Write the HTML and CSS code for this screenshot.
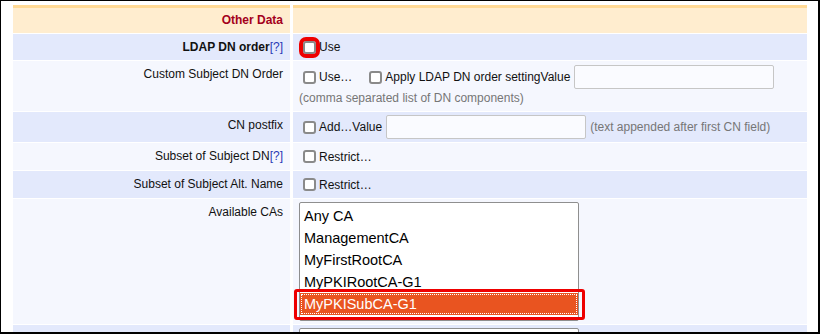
FILE: index.html
```html
<!DOCTYPE html>
<html lang="en">
<head>
  <meta charset="UTF-8">
  <meta name="viewport" content="width=device-width, initial-scale=1.0">
  <title>End Entity Profile - Other Data</title>
  <link rel="stylesheet" href="styles.css">
</head>
<body>
  <div class="frame">
    <table class="profile-table">
      <tr class="section">
        <td class="label">Other Data</td>
        <td class="field"></td>
      </tr>
      <tr class="alt">
        <td class="label"><b>LDAP DN order</b><a href="#" class="help">[?]</a></td>
        <td class="field">
          <div class="line">
            <label class="check-group"><input type="checkbox" class="flagged">Use</label>
          </div>
        </td>
      </tr>
      <tr class="plain">
        <td class="label">Custom Subject DN Order</td>
        <td class="field">
          <div class="line tall">
            <label class="check-group"><input type="checkbox">Use…</label>
            <label class="check-group"><input type="checkbox">Apply LDAP DN order setting</label>
            <span>Value</span>
            <input type="text" class="text-input">
          </div>
          <div class="hint">(comma separated list of DN components)</div>
        </td>
      </tr>
      <tr class="alt">
        <td class="label">CN postfix</td>
        <td class="field tight">
          <div class="line tall">
            <label class="check-group"><input type="checkbox">Add…</label>
            <span>Value</span>
            <input type="text" class="text-input">
            <span class="hint">(text appended after first CN field)</span>
          </div>
        </td>
      </tr>
      <tr class="plain">
        <td class="label">Subset of Subject DN<a href="#" class="help">[?]</a></td>
        <td class="field">
          <div class="line roomy">
            <label class="check-group"><input type="checkbox">Restrict…</label>
          </div>
        </td>
      </tr>
      <tr class="alt">
        <td class="label">Subset of Subject Alt. Name</td>
        <td class="field">
          <div class="line roomy">
            <label class="check-group"><input type="checkbox">Restrict…</label>
          </div>
        </td>
      </tr>
      <tr class="plain">
        <td class="label">Available CAs</td>
        <td class="field tight">
          <div class="ca-list" role="listbox">
            <div class="ca-item" role="option">Any CA</div>
            <div class="ca-item" role="option">ManagementCA</div>
            <div class="ca-item" role="option">MyFirstRootCA</div>
            <div class="ca-item" role="option">MyPKIRootCA-G1</div>
            <div class="ca-item selected" role="option" aria-selected="true">MyPKISubCA-G1<span class="annot"></span></div>
          </div>
        </td>
      </tr>
      <tr class="alt">
        <td class="label"></td>
        <td class="field tight">
          <div class="ca-select"></div>
        </td>
      </tr>
    </table>
  </div>
</body>
</html>
```

FILE: styles.css
```css
body {
  margin: 0;
  font-family: "Liberation Sans", Arial, sans-serif;
  font-size: 12px;
  color: #111;
  background: #fff;
}
.frame {
  width: 820px;
  height: 334px;
  box-sizing: border-box;
  border: solid #000;
  border-width: 1px 2px 2px 1px;
  overflow: hidden;
  background: #fff;
}
.profile-table {
  width: 800px;
  margin: 3px 0 0 9px;
  border-spacing: 3px 1px;
  table-layout: fixed;
}
.profile-table td {
  box-sizing: border-box;
  padding: 4px 6px;
  line-height: 18px;
  vertical-align: top;
}
.profile-table td.label {
  width: 277px;
  padding-right: 7px;
  text-align: right;
}
.profile-table td.tight {
  padding-top: 3px;
  padding-bottom: 3px;
}
.section td {
  background: #ffedcf;
  border-top: 3px solid #ffd995;
}
.profile-table .section td {
  padding-top: 3px;
  padding-bottom: 4px;
}
.section .label {
  font-weight: bold;
  color: #a3001c;
}
.alt td {
  background: #e3e9fc;
}
.plain td {
  background: #f5f7fe;
}
.help {
  color: #2a3ab5;
  text-decoration: none;
}
.line {
  display: flex;
  align-items: center;
  min-height: 18px;
}
.line.tall {
  height: 24px;
}
.line.roomy {
  min-height: 19px;
}
.check-group {
  display: flex;
  align-items: center;
}
.check-group + .check-group {
  margin-left: 13px;
}
.check-group input {
  appearance: none;
  -webkit-appearance: none;
  flex: none;
  width: 13px;
  height: 13px;
  margin: 0 3px 0 4px;
  box-sizing: border-box;
  border: 2px solid #8a8a8a;
  border-radius: 3px;
  background: #fff;
}
.check-group input.flagged {
  outline: 4px solid #ee0000;
  outline-offset: 0;
}
.text-input {
  width: 200px;
  height: 24px;
  box-sizing: border-box;
  margin: 0 0 0 4px;
  padding: 0 4px;
  border: 1px solid #c6c6c6;
  border-radius: 2px;
  background: #fafbff;
  font: inherit;
}
.hint {
  color: #767676;
}
.line .hint {
  margin-left: 4px;
}
.ca-list {
  width: 280px;
  height: 119px;
  box-sizing: border-box;
  padding-top: 2px;
  border: 1px solid #8f8f8f;
  border-radius: 2px;
  background: #fff;
  font-size: 14.5px;
  color: #000;
}
.ca-item {
  height: 22px;
  line-height: 22px;
  padding-left: 4px;
  white-space: nowrap;
}
.ca-item.selected {
  position: relative;
  background: #e95420;
  color: #fff;
  outline: 1px dotted #fff;
  outline-offset: -2px;
}
.annot {
  position: absolute;
  top: -4px;
  bottom: -5px;
  left: -6px;
  right: -7px;
  border: 3px solid #ee0000;
  border-radius: 3px;
  pointer-events: none;
}
.ca-select {
  width: 280px;
  height: 24px;
  box-sizing: border-box;
  border: 1px solid #8f8f8f;
  border-radius: 2px;
  background: #fff;
}
```
